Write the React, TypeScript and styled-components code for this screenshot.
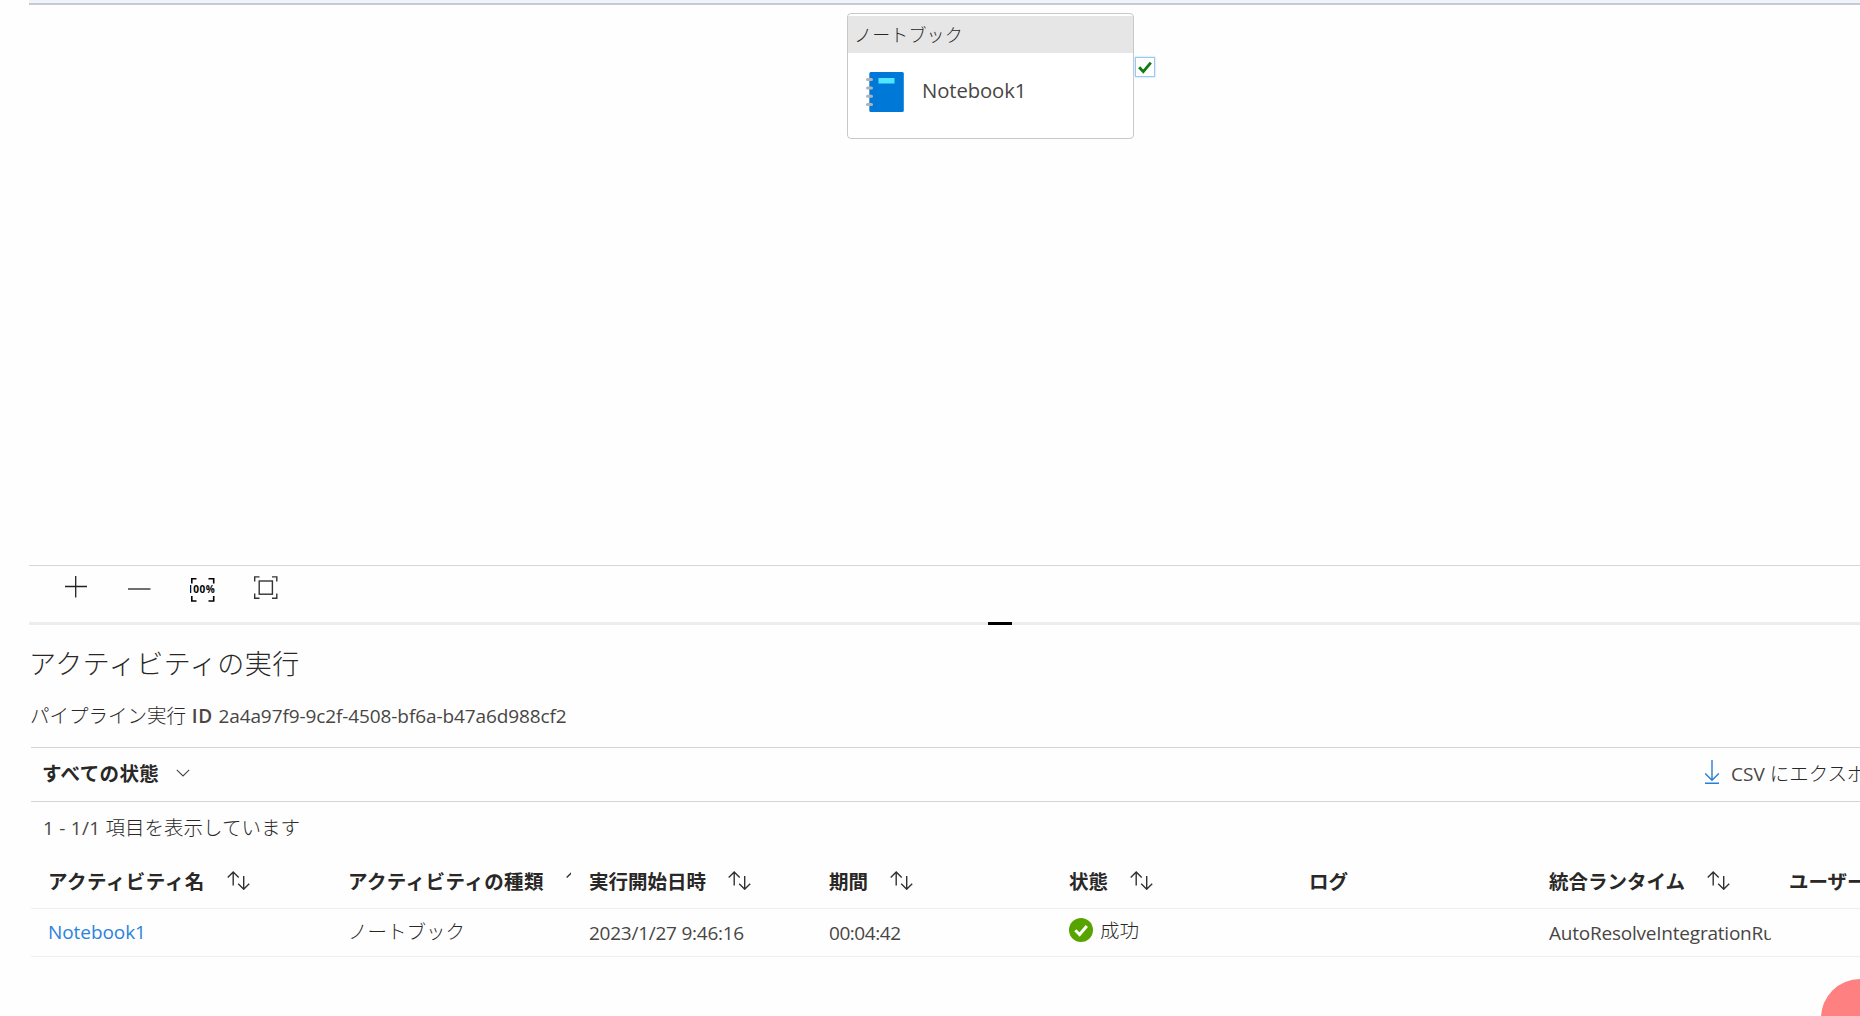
import React from 'react';
import styled, { createGlobalStyle } from 'styled-components';

const GlobalStyle = createGlobalStyle`
  * { box-sizing: border-box; }
  html, body { margin: 0; padding: 0; background: #fefefe; overflow: hidden; }
  body {
    font-family: 'Noto Sans CJK JP', 'Noto Sans', sans-serif;
    font-size: 19.5px;
    font-weight: 300;
    color: #292827;
  }
`;

const Page = styled.main`
  position: relative;
  width: 1860px;
  height: 1016px;
  padding-left: 29px;
  overflow: hidden;
  display: flex;
  flex-direction: column;
`;

const Latin = styled.span<{ $size?: number; $spacing?: number; $weight?: number }>`
  font-family: 'Open Sans', 'Noto Sans', sans-serif;
  font-size: ${(p) => p.$size ?? 19}px;
  letter-spacing: ${(p) => p.$spacing ?? -0.3}px;
  font-weight: ${(p) => p.$weight ?? 400};
  color: #484644;
  white-space: pre;
`;

const TopStrip = styled.div`
  flex: none;
  height: 5px;
  background: #eef3fc;
  border-bottom: 2px solid #c9cacb;
`;

const Canvas = styled.section`
  position: relative;
  flex: none;
  height: 560px;
`;

const Node = styled.div`
  position: absolute;
  left: 818px;
  top: 8px;
  width: 287px;
  height: 126px;
  border: 1.5px solid #c8c8c8;
  border-radius: 4px;
  background: #fff;
  padding-top: 2px;
`;

const NodeHeader = styled.div`
  height: 37px;
  padding-left: 6px;
  background: #e6e6e6;
  font-size: 18px;
  letter-spacing: 0.15px;
  line-height: 36px;
`;

const NodeBody = styled.div`
  display: flex;
  align-items: flex-start;
  height: 84px;
  padding: 19px 0 0 18px;
  gap: 18px;
  line-height: 36px;
`;

const NodeStatus = styled.div`
  position: absolute;
  left: 1106px;
  top: 52px;
  width: 20px;
  height: 20px;
  background: #fff;
  border: 1px solid #9cc8f0;
  box-shadow: 0 0 2px #a9d0f5;
  display: flex;
`;

const ZoomBar = styled.div`
  flex: none;
  display: flex;
  height: 57px;
  border-top: 1px solid #d6d6d6;
  padding: 10px 0 0 35px;
  gap: 39px;
`;

const Splitter = styled.div`
  flex: none;
  height: 3px;
  background: #ededed;
  padding-left: 959px;
`;

const Grip = styled.div`
  width: 24px;
  height: 3px;
  background: #000;
`;

const Runs = styled.section`
  flex: none;
  padding-left: 2px;
`;

const Title = styled.h2`
  margin: 0 0 0 -2px;
  padding-top: 16px;
  height: 71px;
  font-size: 27px;
  letter-spacing: 0.55px;
  line-height: 44px;
  font-weight: 300;
`;

const RunId = styled.div`
  display: flex;
  align-items: baseline;
  height: 51px;
  margin-left: -1px;
  line-height: 38px;
`;

const FilterBar = styled.div`
  display: flex;
  align-items: center;
  height: 55px;
  border-top: 1px solid #d4d4d4;
  border-bottom: 1px solid #d4d4d4;
  padding: 0 0 5px 11px;
`;

const Filter = styled.div`
  display: flex;
  align-items: center;
  gap: 17px;
  font-weight: 700;
  letter-spacing: 0.4px;
  & > svg { margin-top: 2px; }
`;

const Export = styled.div`
  display: flex;
  align-items: center;
  gap: 11px;
  width: 156px;
  margin-left: auto;
  white-space: nowrap;
  & > svg { flex: none; }
`;

const Count = styled.div`
  height: 53px;
  padding-left: 12px;
  line-height: 50px;
`;

const Row = styled.div<{ $header?: boolean }>`
  display: grid;
  grid-template-columns: 300px repeat(7, 240px);
  height: ${(p) => (p.$header ? 54 : 48)}px;
  padding-left: 18px;
  border-bottom: 1px solid #eeeeee;
  font-weight: ${(p) => (p.$header ? 700 : 300)};
  line-height: ${(p) => (p.$header ? 51 : 43)}px;
`;

const Cell = styled.div<{ $header?: boolean; $spacing?: number }>`
  display: flex;
  align-items: center;
  gap: 22px;
  margin: 0 18px 0 0;
  &:nth-child(-n + 2) { margin-left: -1px; }
  padding-bottom: ${(p) => (p.$header ? 3 : 4)}px;
  letter-spacing: ${(p) => p.$spacing ?? 0}px;
  overflow: hidden;
  white-space: nowrap;
  & > svg { flex: none; }
`;

const Status = styled.div`
  display: flex;
  align-items: center;
  gap: 7px;
  margin-top: -2px;
`;

const Link = styled(Latin)`
  color: #2b83dc;
  padding-top: 3px;
`;

const Value = styled(Latin)`
  padding-top: 5px;
`;

const HelpBubble = styled.div`
  position: absolute;
  left: 1821px;
  top: 979px;
  width: 78px;
  height: 78px;
  border-radius: 50%;
  background: #ff8080;
`;

const NotebookIcon = () => (
  <svg width="38" height="40" viewBox="0 0 38 40">
    <rect x="3.3" y="0" width="34.5" height="40" rx="1.5" fill="#0078d8" />
    <rect x="12.5" y="6" width="16" height="5.5" fill="#50e6ff" />
    {[6, 14.4, 22.7, 31].map((y) => (
      <rect key={y} x="0" y={y} width="7" height="3" rx="1.5" fill="#b3b3b3" />
    ))}
  </svg>
);

const SortIcon = () => (
  <svg width="23" height="19" viewBox="0 0 23 19" fill="none" stroke="#323130" strokeWidth="1.4">
    <path d="M6.2 14.5V1.5M.7 6.5L6.2 1L11.7 6.5" />
    <path d="M16.7 5V18M11.2 12.7L16.7 18.2L22.2 12.7" />
  </svg>
);

const headers: { label: string; sort: boolean; spacing?: number }[] = [
  { label: 'アクティビティ名', sort: true, spacing: 0.5 },
  { label: 'アクティビティの種類', sort: true, spacing: 0.42 },
  { label: '実行開始日時', sort: true },
  { label: '期間', sort: true },
  { label: '状態', sort: true },
  { label: 'ログ', sort: false },
  { label: '統合ランタイム', sort: true },
  { label: 'ユーザー プロパティ', sort: false },
];

export default function App() {
  return (
    <>
      <GlobalStyle />
      <Page>
        <TopStrip />
        <Canvas>
          <Node>
            <NodeHeader>ノートブック</NodeHeader>
            <NodeBody>
              <NotebookIcon />
              <Latin $size={20.3} $spacing={-0.1}>Notebook1</Latin>
            </NodeBody>
          </Node>
          <NodeStatus>
            <svg width="18" height="18" viewBox="0 0 18 18" fill="none" stroke="#107c10" strokeWidth="2.8">
              <path d="M3.2 9.2L7.3 13.6L14.8 4.6" />
            </svg>
          </NodeStatus>
        </Canvas>
        <ZoomBar>
          <svg width="24" height="28" stroke="#222" strokeWidth="1.3">
            <path d="M1 10.5H23M11.7 0V21.5" />
          </svg>
          <svg width="24" height="28" stroke="#222" strokeWidth="1.3">
            <path d="M1 13H23.5" />
          </svg>
          <svg width="25" height="28" fill="none" stroke="#000" strokeWidth="1.6">
            <path d="M1.8 7.5V2.8H6.5M18.5 2.8H23.7V7.5M1.8 20V25H6.5M18.5 25H23.7V20" />
            <text x="-3" y="17" textLength="27.8" fill="#000" stroke="none" fontFamily="Open Sans, sans-serif" fontSize="10" fontWeight="700">100%</text>
          </svg>
          <svg width="25" height="28" fill="none" stroke="#333" strokeWidth="1.4">
            <path d="M.7 5.5V.9H5.5M18 .9H22.8V5.5M.7 17.5V22.2H5.5M18 22.2H22.8V17.5" />
            <rect x="5.2" y="5" width="13.2" height="13.2" />
          </svg>
        </ZoomBar>
        <Splitter>
          <Grip />
        </Splitter>
        <Runs>
          <Title>アクティビティの実行</Title>
          <RunId>
            パイプライン実行
            <Latin $weight={600} $spacing={0.7}> ID </Latin>
            <Latin $spacing={-0.1}>2a4a97f9-9c2f-4508-bf6a-b47a6d988cf2</Latin>
          </RunId>
          <FilterBar>
            <Filter>
              すべての状態
              <svg width="14" height="8" fill="none" stroke="#444" strokeWidth="1.1">
                <path d="M.8 .8L7 7L13.2 .8" />
              </svg>
            </Filter>
            <Export>
              <svg width="16" height="24" fill="none" stroke="#2b7cd3" strokeWidth="1.4">
                <path d="M8 0V20M1.2 13.5L8 20.3L14.8 13.5M1 23.2H15" />
              </svg>
              <span><Latin $spacing={0}>CSV </Latin>にエクスポート</span>
            </Export>
          </FilterBar>
          <Count><Latin $spacing={0.25}>1 - 1/1 </Latin>項目を表示しています</Count>
          <Row $header>
            {headers.map((h) => (
              <Cell key={h.label} $header $spacing={h.spacing}>
                {h.label}
                {h.sort && <SortIcon />}
              </Cell>
            ))}
          </Row>
          <Row>
            <Cell><Link $spacing={-0.07}>Notebook1</Link></Cell>
            <Cell>ノートブック</Cell>
            <Cell><Value $spacing={-0.25}>2023/1/27 9:46:16</Value></Cell>
            <Cell><Value $spacing={-0.45}>00:04:42</Value></Cell>
            <Cell>
              <Status>
                <svg width="24" height="24" viewBox="0 0 24 24">
                  <circle cx="12" cy="12" r="12" fill="#57a300" />
                  <path d="M6.3 12.3L10.6 16.5L17.8 8" fill="none" stroke="#fff" strokeWidth="3" />
                </svg>
                成功
              </Status>
            </Cell>
            <Cell />
            <Cell><Value $spacing={-0.22}>AutoResolveIntegrationRuntime</Value></Cell>
            <Cell />
          </Row>
        </Runs>
        <HelpBubble />
      </Page>
    </>
  );
}
